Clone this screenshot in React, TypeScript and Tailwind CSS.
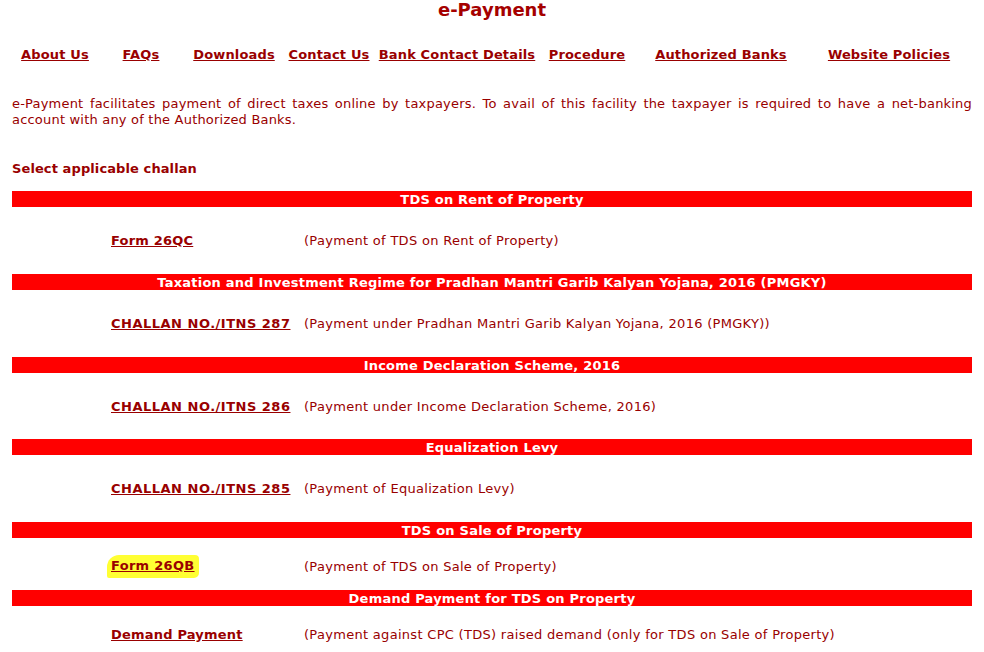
const navLinks = [
  { label: "About Us", ml: "ml-[55px]" },
  { label: "FAQs", ml: "ml-[86px]" },
  { label: "Downloads", ml: "ml-[93px]" },
  { label: "Contact Us", ml: "ml-[95px]" },
  { label: "Bank Contact Details", ml: "ml-[128px]" },
  { label: "Procedure", ml: "ml-[130px]" },
  { label: "Authorized Banks", ml: "ml-[134px]" },
  { label: "Website Policies", ml: "ml-[168px]" },
];

type Section = {
  title: string;
  link: string;
  desc: string;
  rowH: string;
  linkTrack: string;
  highlight?: boolean;
};

const sections: Section[] = [
  {
    title: "TDS on Rent of Property",
    link: "Form 26QC",
    desc: "(Payment of TDS on Rent of Property)",
    rowH: "h-[67px]",
    linkTrack: "tracking-[0.2px]",
  },
  {
    title: "Taxation and Investment Regime for Pradhan Mantri Garib Kalyan Yojana, 2016 (PMGKY)",
    link: "CHALLAN NO./ITNS 287",
    desc: "(Payment under Pradhan Mantri Garib Kalyan Yojana, 2016 (PMGKY))",
    rowH: "h-[67px] pt-[1px]",
    linkTrack: "tracking-[0.5px]",
  },
  {
    title: "Income Declaration Scheme, 2016",
    link: "CHALLAN NO./ITNS 286",
    desc: "(Payment under Income Declaration Scheme, 2016)",
    rowH: "h-[66px] pt-[1px]",
    linkTrack: "tracking-[0.5px]",
  },
  {
    title: "Equalization Levy",
    link: "CHALLAN NO./ITNS 285",
    desc: "(Payment of Equalization Levy)",
    rowH: "h-[67px]",
    linkTrack: "tracking-[0.5px]",
  },
  {
    title: "TDS on Sale of Property",
    link: "Form 26QB",
    desc: "(Payment of TDS on Sale of Property)",
    rowH: "h-[52px] pt-[5px]",
    linkTrack: "tracking-[0.3px]",
    highlight: true,
  },
  {
    title: "Demand Payment for TDS on Property",
    link: "Demand Payment",
    desc: "(Payment against CPC (TDS) raised demand (only for TDS on Sale of Property)",
    rowH: "h-[58px]",
    linkTrack: "tracking-[0.2px]",
  },
];

export default function App() {
  return (
    <div className="min-h-[652px] bg-white text-[#990000] font-['DejaVu_Sans',Verdana,sans-serif] text-[13px]">
      {/* Title */}
      <h1 className="text-center text-[18px] font-bold leading-[20px] text-[#a50000]">
        e-Payment
      </h1>

      {/* Nav, each link centred on its own column */}
      <div className="mt-[27px] flex leading-[16px] font-bold tracking-[0.15px]">
        {navLinks.map((n) => (
          <div key={n.label} className={`${n.ml} flex w-0 justify-center whitespace-nowrap`}>
            <a href="#" className="underline">
              {n.label}
            </a>
          </div>
        ))}
      </div>

      <div className="px-[12px]">
        <p className="mt-[33px] w-[960px] text-justify leading-[16px] tracking-[0.2px]">
          e-Payment facilitates payment of direct taxes online by taxpayers. To avail of this facility the taxpayer is required to have a net-banking account with any of the Authorized Banks.
        </p>

        <p className="mt-[33px] font-bold leading-[16px] tracking-[0.1px]">Select applicable challan</p>

        <div className="mt-[14px] w-[960px]">
          {sections.map((s) => (
            <div key={s.title}>
              <div className="h-[16px] bg-[#ff0000] pt-[1px] text-center font-bold text-white leading-[16px] whitespace-nowrap tracking-[0.22px]">
                {s.title}
              </div>
              <div className={`${s.rowH} flex items-center pl-[99px] leading-[16px]`}>
                <div className="w-[193px] shrink-0">
                  {s.highlight ? (
                    <span className="-ml-[4px] inline-block rounded-tl-[12px] rounded-tr-[4px] rounded-br-[5px] rounded-bl-[2px] bg-[#ffff33] pl-[4px] pr-[4px] pt-[3px] pb-[4px]">
                      <a href="#" className={`font-bold underline ${s.linkTrack}`}>
                        {s.link}
                      </a>
                    </span>
                  ) : (
                    <a href="#" className={`font-bold underline whitespace-nowrap ${s.linkTrack}`}>
                      {s.link}
                    </a>
                  )}
                </div>
                <span className="whitespace-nowrap tracking-[0.3px]">{s.desc}</span>
              </div>
            </div>
          ))}
        </div>
      </div>
    </div>
  );
}
